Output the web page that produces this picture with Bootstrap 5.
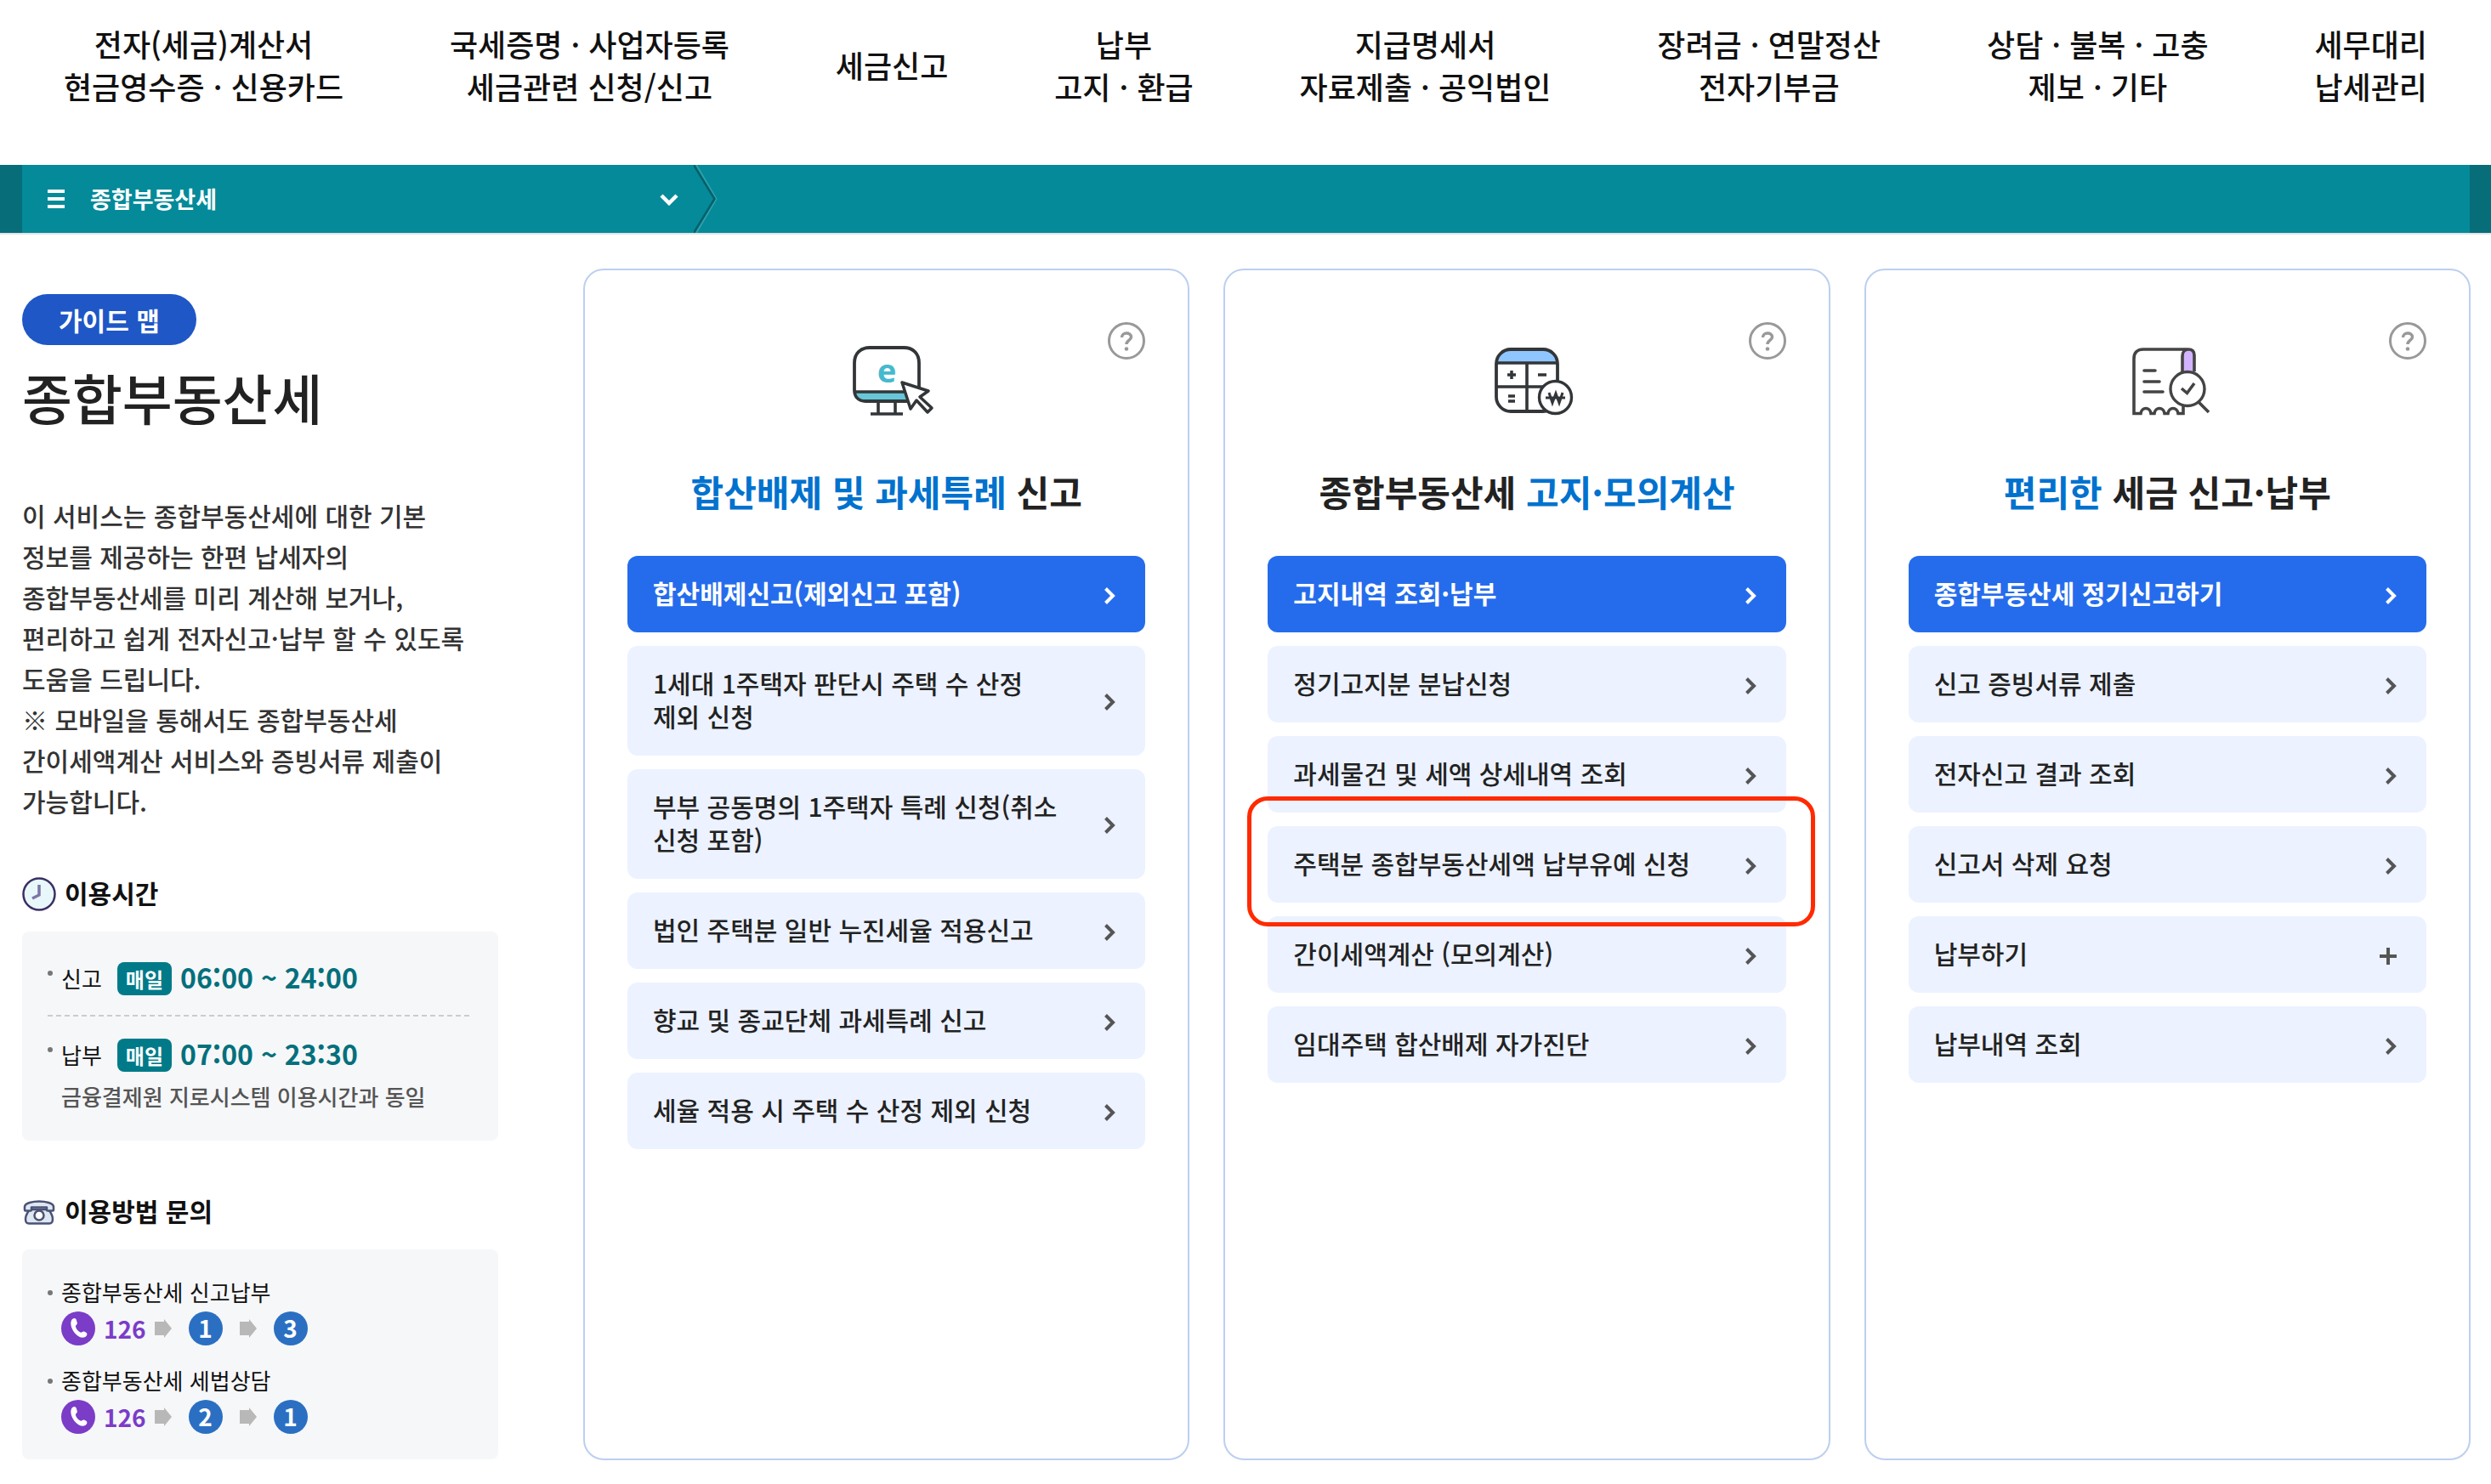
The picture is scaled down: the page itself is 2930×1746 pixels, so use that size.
<!DOCTYPE html>
<html lang="ko">
<head>
<meta charset="utf-8">
<meta name="viewport" content="width=device-width, initial-scale=1">
<title>종합부동산세</title>
<link href="https://cdn.jsdelivr.net/npm/bootstrap@5.3.0/dist/css/bootstrap.min.css" rel="stylesheet">
<style>
body{font-family:"Noto Sans CJK KR","Noto Sans",sans-serif;font-weight:500;color:#111;background:#fff;word-break:keep-all}
a{color:inherit;text-decoration:none}
.gnb{padding:26px 75px 68px 75px;font-size:36px;line-height:50px;text-align:center}
.crumb-wrap{background:#076d79;padding:0 25px 0 26px;border-bottom:2px solid #e2e4e6}
.crumb{background:#058a99;height:80px}
.crumb-btn{width:790px;padding:0 18px 0 30px;border:0;background:none;color:#fff;font-size:27px;font-weight:700;gap:30px}
.page-main{padding:40px 24px 28px 26px;gap:100px}
.side{width:560px;flex:none;padding-top:30px}
.pill{padding:0 43px;font-size:30px;line-height:60px;border-radius:30px;background:#1f57c6;color:#fff;font-weight:700}
.side h1{font-size:64px;line-height:80px;font-weight:500;margin:20px 0 76px;color:#222}
.intro{max-width:540px;font-size:30px;line-height:48px;color:#333;margin-bottom:62px}
.side h2{font-size:30px;line-height:45px;font-weight:700;margin:0 0 20px;gap:10px}
.side h2 span{padding-bottom:3px}
.infobox{background:#f6f7f9;border-radius:8px;padding:30px;font-size:26px;line-height:36px;font-weight:400}
.infobox ul{margin:0;padding:0;list-style:none}
.infobox li{padding-left:16px;position:relative}
.infobox li::before{content:"";position:absolute;left:0;top:16px;width:6px;height:6px;border-radius:50%;background:#777}
.openhours{margin-bottom:60px}
.rule-dash{height:2px;margin:18px 0 20px;background:repeating-linear-gradient(90deg,#ccc 0 6px,transparent 6px 10px)}
.sub-note{margin:6px 0 4px;padding-left:16px;color:#555;font-weight:500}
.daily{background:#007a88;color:#fff;font-size:24px;line-height:39px;font-weight:700;border-radius:8px;padding:0 10px;margin:0 10px 0 18px}
.hours{color:#04707c;font-weight:700;font-size:32px;line-height:46px;padding-bottom:4px}
.infobox.callbox{padding-top:32px}
.callrow{margin-top:5px}
.calls{gap:23px}
.num{width:40px;height:40px;border-radius:50%;background:#2b6fc2;color:#fff;font-weight:700;font-size:28px;line-height:38px;text-align:center;margin:0 20px}
.tel{color:#7b3cc8;font-weight:700;font-size:28px;line-height:40px;margin:0 10px}
.guide{border:2px solid #bccff0;border-radius:24px;padding:61px 50px;min-height:1402px;flex:1 1 0;min-width:0}
.guides{gap:40px}
.help{width:44px;height:44px;padding:0;border:0;background:none}
.help svg{display:block}
.side-blank{width:44px}
.guide-icon{margin-top:11px;overflow:visible}
.guide h3{font-size:42px;line-height:60px;font-weight:700;text-align:center;color:#222;margin:58px 0 46px}
.guide h3 span{color:#0072ce}
.menu{gap:16px}
.menu a{display:flex;align-items:center;justify-content:space-between;position:relative;background:#ecf2ff;border-radius:12px;padding:24px 34px 24px 30px;font-size:30px;line-height:39px;color:#222}
.menu .txt{max-width:495px;padding-bottom:3px}
.menu a>svg{margin-top:3px;flex:none;color:#555}
.menu a.main{background:#256cec;color:#fff;font-weight:700}
.menu a.main>svg{color:#fff}
.spotlight{position:absolute;z-index:2;left:-24px;right:-34px;top:-35px;bottom:-28px;border:5px solid #ff2a00;border-radius:24px;pointer-events:none}
</style>
</head>
<body>
<svg width="0" height="0" class="position-absolute">
<defs>
<symbol id="chev" viewBox="0 0 16 24"><path d="M3.500 3.500l8.500 8.500-8.500 8.500" fill="none" stroke="currentColor" stroke-width="4"/></symbol>
<symbol id="q" viewBox="0 0 44 44"><circle cx="22" cy="22" r="20.500" fill="none" stroke="#999" stroke-width="3"/><path d="M16.500 18c0-6.500 11-6.500 11-.5 0 4-5.500 4-5.500 8.500" fill="none" stroke="#999" stroke-width="3.500"/><circle cx="22" cy="31.500" r="2.300" fill="#999"/></symbol>
<symbol id="call" viewBox="0 0 40 40"><circle cx="20" cy="20" r="20" fill="#7b3cc8"/><path d="M12 10.500c1.500-3 5-3.500 6 0l.8 3c.5 2-2.300 2.500-1.800 4.500.8 3 3 5.500 5.500 6.500 2 .8 2.500-1.500 4.500-1l2.300 1.300c2 1.500 1 4-1 5.200-3.500 1.800-8 .3-11.800-4-4-4.500-6.500-11.200-4.500-15.500z" fill="#fff"/></symbol>
<symbol id="arr" viewBox="0 0 20 22"><path d="M0 3h11V0l9 11-9 11v-3H0z" fill="#b8b8b8"/></symbol>
</defs>
</svg>

<nav class="gnb d-flex justify-content-between align-items-center" aria-label="주 메뉴">
<a href="#">전자(세금)계산서<br>현금영수증 · 신용카드</a>
<a href="#">국세증명 · 사업자등록<br>세금관련 신청/신고</a>
<a href="#">세금신고</a>
<a href="#">납부<br>고지 · 환급</a>
<a href="#">지급명세서<br>자료제출 · 공익법인</a>
<a href="#">장려금 · 연말정산<br>전자기부금</a>
<a href="#">상담 · 불복 · 고충<br>제보 · 기타</a>
<a href="#">세무대리<br>납세관리</a>
</nav>

<div class="crumb-wrap">
<div class="crumb d-flex">
<button type="button" class="crumb-btn d-flex align-items-center">
<svg width="20" height="22" viewBox="0 0 20 22"><path d="M0 2h20M0 11h20M0 20h20" stroke="#fff" stroke-width="4"/></svg>
<span>종합부동산세</span>
<svg class="ms-auto" width="22" height="16" viewBox="0 0 22 16"><path d="M2 4l9 9 9-9" fill="none" stroke="#fff" stroke-width="4.500"/></svg>
</button>
<svg width="28" height="80" viewBox="0 0 28 80"><path d="M3 0l23.500 40L3 80" fill="none" stroke="#2fa0ac" stroke-width="2"/><path d="M0 0l24.500 40L0 80" fill="none" stroke="#04606b" stroke-width="2.500"/></svg>
</div>
</div>

<main class="page-main d-flex">
<aside class="side">
<span class="pill d-inline-block">가이드 맵</span>
<h1>종합부동산세</h1>
<p class="intro">이 서비스는 종합부동산세에 대한 기본 정보를 제공하는 한편 납세자의 종합부동산세를 미리 계산해 보거나, 편리하고 쉽게 전자신고·납부 할 수 있도록 도움을 드립니다.<br>※ 모바일을 통해서도 종합부동산세 간이세액계산 서비스와 증빙서류 제출이 가능합니다.</p>

<h2 class="d-flex align-items-center"><svg width="40" height="40" viewBox="0 0 40 40"><circle cx="20" cy="20" r="18.500" fill="#e8f8fa" stroke="#3a2f63" stroke-width="2.500"/><path d="M20 9v12l-8 4" fill="none" stroke="#7d75a8" stroke-width="3.500"/></svg><span>이용시간</span></h2>
<div class="infobox openhours">
<ul>
<li class="d-flex align-items-center">신고<span class="daily">매일</span><span class="hours">06:00 ~ 24:00</span></li>
</ul>
<div class="rule-dash"></div>
<ul>
<li class="d-flex align-items-center">납부<span class="daily">매일</span><span class="hours">07:00 ~ 23:30</span></li>
</ul>
<p class="sub-note">금융결제원 지로시스템 이용시간과 동일</p>
</div>

<h2 class="d-flex align-items-center"><svg width="40" height="40" viewBox="0 0 40 40"><path d="M9 17c-3 4-5 7-5 11 0 4 1 5.500 4 5.500h24c3 0 4-1.500 4-5.500 0-4-2-7-5-11z" fill="#dde8f2" stroke="#4b5275" stroke-width="2.500"/><path d="M3 17.500v-4c1.500-8 32.500-8 34 0v4q0 1-1 1h-6q-1 0-1-1v-3H11v3q0 1-1 1H4q-1 0-1-1z" fill="#dde8f2" stroke="#4b5275" stroke-width="2.500" stroke-linejoin="round"/><circle cx="20" cy="24" r="5.500" fill="#fff" stroke="#4b5275" stroke-width="2.500"/></svg><span>이용방법 문의</span></h2>
<div class="infobox callbox">
<ul class="calls d-flex flex-column">
<li>종합부동산세 신고납부
<div class="callrow d-flex align-items-center"><svg width="40" height="40"><use href="#call"/></svg><a href="tel:126" class="tel">126</a><svg width="20" height="22"><use href="#arr"/></svg><span class="num">1</span><svg width="20" height="22"><use href="#arr"/></svg><span class="num">3</span></div></li>
<li>종합부동산세 세법상담
<div class="callrow d-flex align-items-center"><svg width="40" height="40"><use href="#call"/></svg><a href="tel:126" class="tel">126</a><svg width="20" height="22"><use href="#arr"/></svg><span class="num">2</span><svg width="20" height="22"><use href="#arr"/></svg><span class="num">1</span></div></li>
</ul>
</div>
</aside>

<div class="guides d-flex flex-grow-1">
<section class="guide">
<div class="d-flex justify-content-between align-items-start">
<span class="side-blank"></span>
<svg class="guide-icon" width="104" height="100" viewBox="1 0 104 100"><path d="M15 71h59l2 11H28c-7 0-12-4-13-11z" fill="#68c6d9"/><path d="M77 82H28c-8 0-13-5-13-13V37c0-11 7-18 18-18h40c11 0 18 7 18 18v30" fill="none" stroke="#333638" stroke-width="3.800"/><path d="M15 71h60M43 83v14M63 83v14M34 97h38" fill="none" stroke="#333638" stroke-width="3.600"/><text x="53" y="60" text-anchor="middle" font-family="Noto Sans" font-weight="700" font-size="38" fill="#46b9cf">e</text><path d="M71 60l31 10-10 7 14 13-5 5-13-14-7 10z" fill="#fff" stroke="#333638" stroke-width="3.500" stroke-linejoin="round"/></svg>
<button type="button" class="help" aria-label="합산배제 도움말"><svg width="44" height="44"><use href="#q"/></svg></button>
</div>
<h3><span>합산배제 및 과세특례</span> 신고</h3>
<div class="menu d-flex flex-column">
<a class="main" href="#"><span class="txt">합산배제신고(제외신고 포함)</span><svg width="16" height="24"><use href="#chev"/></svg></a>
<a href="#"><span class="txt">1세대 1주택자 판단시 주택 수 산정 제외 신청</span><svg width="16" height="24"><use href="#chev"/></svg></a>
<a href="#"><span class="txt">부부 공동명의 1주택자 특례 신청(취소 신청 포함)</span><svg width="16" height="24"><use href="#chev"/></svg></a>
<a href="#"><span class="txt">법인 주택분 일반 누진세율 적용신고</span><svg width="16" height="24"><use href="#chev"/></svg></a>
<a href="#"><span class="txt">향교 및 종교단체 과세특례 신고</span><svg width="16" height="24"><use href="#chev"/></svg></a>
<a href="#"><span class="txt">세율 적용 시 주택 수 산정 제외 신청</span><svg width="16" height="24"><use href="#chev"/></svg></a>
</div>
</section>

<section class="guide">
<div class="d-flex justify-content-between align-items-start">
<span class="side-blank"></span>
<svg class="guide-icon" width="104" height="100" viewBox="-1 -5 104 100"><path d="M15 32c0-10 7-16 17-16h38c10 0 17 6 17 16z" fill="#90c6ff"/><rect x="15" y="16" width="72" height="73" rx="17" fill="none" stroke="#333638" stroke-width="3.800"/><path d="M15 32h72M51 32v57M15 60h72" stroke="#333638" stroke-width="3.600"/><path d="M28 46h10M33 41v10M64 46h10M29 71h8M29 77h8" stroke="#333638" stroke-width="3.500"/><circle cx="84.500" cy="72.500" r="19" fill="#fff" stroke="#333638" stroke-width="3.400"/><path d="M77 67l4 12 4-11 4 11 4-12M73 73h23" fill="none" stroke="#333638" stroke-width="3"/></svg>
<button type="button" class="help" aria-label="고지·모의계산 도움말"><svg width="44" height="44"><use href="#q"/></svg></button>
</div>
<h3>종합부동산세 <span>고지·모의계산</span></h3>
<div class="menu d-flex flex-column">
<a class="main" href="#"><span class="txt">고지내역 조회·납부</span><svg width="16" height="24"><use href="#chev"/></svg></a>
<a href="#"><span class="txt">정기고지분 분납신청</span><svg width="16" height="24"><use href="#chev"/></svg></a>
<a href="#"><span class="txt">과세물건 및 세액 상세내역 조회</span><svg width="16" height="24"><use href="#chev"/></svg></a>
<a href="#"><span class="txt">주택분 종합부동산세액 납부유예 신청</span><svg width="16" height="24"><use href="#chev"/></svg><span class="spotlight"></span></a>
<a href="#"><span class="txt">간이세액계산 (모의계산)</span><svg width="16" height="24"><use href="#chev"/></svg></a>
<a href="#"><span class="txt">임대주택 합산배제 자가진단</span><svg width="16" height="24"><use href="#chev"/></svg></a>
</div>
</section>

<section class="guide">
<div class="d-flex justify-content-between align-items-start">
<span class="side-blank"></span>
<svg class="guide-icon" width="104" height="100" viewBox="3 -5 104 100"><path d="M73 43V24c0-10 14-10 14 0v19z" fill="#d3b3ff"/><path d="M74 82v9.500h-6c-1-8-11-8-12 0h-4c-1-8-11-8-12 0h-4c-1-8-11-8-12 0h-8V27c0-7 4-11 11-11h53c5 0 7 3 7 7v19M73 43V24c0-5 3-8 7-8" fill="none" stroke="#444" stroke-width="3.600"/><path d="M28 41h13M28 54h18M28 66h22" stroke="#444" stroke-width="3.600" stroke-linecap="round"/><circle cx="79" cy="62.500" r="20" fill="#fff" stroke="#444" stroke-width="3.400"/><path d="M72 62l6.500 5.500L87 56M92 78l12 12" fill="none" stroke="#444" stroke-width="3.600"/></svg>
<button type="button" class="help" aria-label="신고·납부 도움말"><svg width="44" height="44"><use href="#q"/></svg></button>
</div>
<h3><span>편리한</span> 세금 신고·납부</h3>
<div class="menu d-flex flex-column">
<a class="main" href="#"><span class="txt">종합부동산세 정기신고하기</span><svg width="16" height="24"><use href="#chev"/></svg></a>
<a href="#"><span class="txt">신고 증빙서류 제출</span><svg width="16" height="24"><use href="#chev"/></svg></a>
<a href="#"><span class="txt">전자신고 결과 조회</span><svg width="16" height="24"><use href="#chev"/></svg></a>
<a href="#"><span class="txt">신고서 삭제 요청</span><svg width="16" height="24"><use href="#chev"/></svg></a>
<a href="#"><span class="txt">납부하기</span><svg width="22" height="22" viewBox="0 0 22 22"><path d="M11 1v20M1 11h20" stroke="currentColor" stroke-width="4"/></svg></a>
<a href="#"><span class="txt">납부내역 조회</span><svg width="16" height="24"><use href="#chev"/></svg></a>
</div>
</section>
</div>
</main>
<script src="https://cdn.jsdelivr.net/npm/bootstrap@5.3.0/dist/js/bootstrap.bundle.min.js"></script>
</body>
</html>
